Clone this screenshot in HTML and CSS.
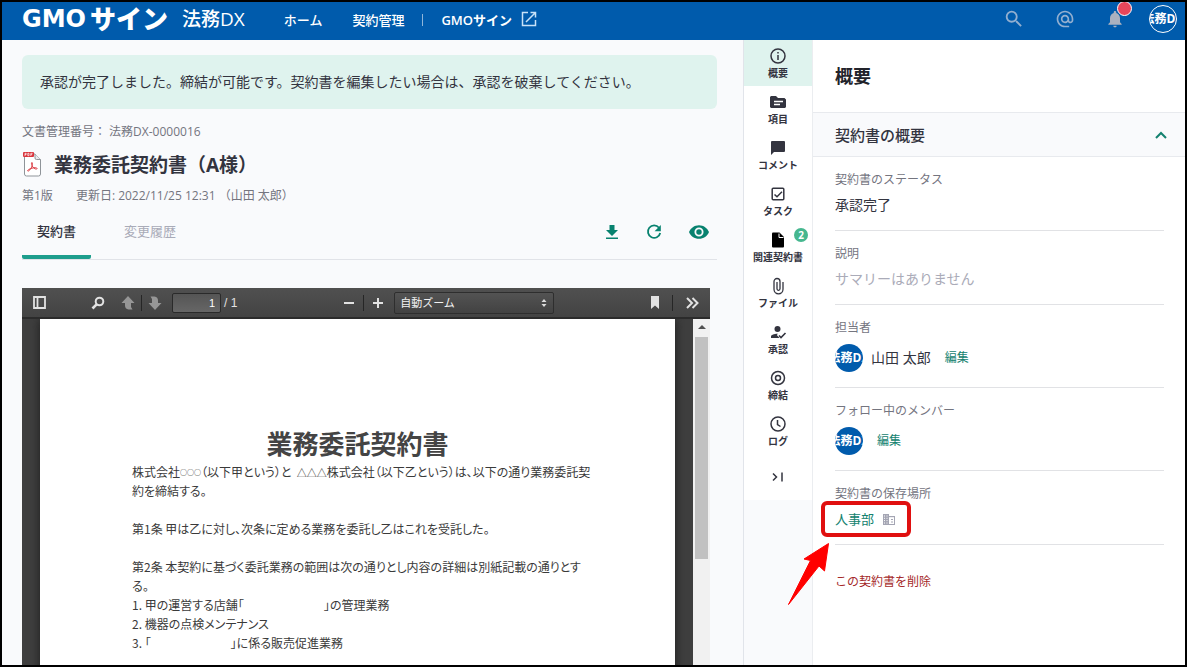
FILE: index.html
```html
<!DOCTYPE html>
<html lang="ja">
<head>
<meta charset="utf-8">
<meta name="viewport" content="width=device-width, initial-scale=1">
<title>業務委託契約書（A様） - 法務DX</title>
<link rel="stylesheet" href="styles.css">
</head>
<body>
<header class="topbar">
  <a class="logo" href="#"><span class="logo-latin">GMO</span><span class="logo-kana">サイン</span><span class="logo-product">法務DX</span></a>
  <nav class="topnav">
    <a href="#">ホーム</a>
    <a href="#">契約管理</a>
  </nav>
  <span class="topsep"></span>
  <a class="extlink" href="#">GMOサイン
    <svg width="16" height="16" viewBox="0 0 16 16" fill="none" stroke="currentColor" stroke-width="1.5"><path d="M7 1.5H1.5v13h13V9M9.5 1.5h5v5M14.5 1.5L5 11"/></svg>
  </a>
  <div class="topactions">
    <button class="icon-btn" aria-label="検索"><svg width="22" height="22" viewBox="0 0 24 24" fill="currentColor"><path d="M15.5 14h-.79l-.28-.27A6.47 6.47 0 0 0 16 9.5 6.5 6.5 0 1 0 9.5 16c1.61 0 3.09-.59 4.23-1.57l.27.28v.79l5 4.99L20.49 19l-4.99-5zm-6 0C7.01 14 5 11.99 5 9.500S7.01 5 9.500 5 14 7.010 14 9.500 11.990 14 9.500 14z"/></svg></button>
    <button class="icon-btn" aria-label="メンション"><svg width="20" height="20" viewBox="0 0 24 24" fill="currentColor"><path d="M12 2C6.480 2 2 6.480 2 12s4.480 10 10 10h5v-2h-5c-4.340 0-8-3.660-8-8s3.660-8 8-8 8 3.660 8 8v1.430c0 .79-.71 1.570-1.500 1.570s-1.500-.78-1.500-1.570V12c0-2.760-2.240-5-5-5s-5 2.240-5 5 2.240 5 5 5c1.380 0 2.640-.56 3.540-1.470.65.890 1.770 1.470 2.960 1.470 1.970 0 3.500-1.600 3.500-3.570V12c0-5.520-4.480-10-10-10zm0 13c-1.660 0-3-1.340-3-3s1.340-3 3-3 3 1.340 3 3-1.340 3-3 3z"/></svg></button>
    <button class="icon-btn bell" aria-label="通知"><svg width="20" height="20" viewBox="0 0 24 24" fill="currentColor"><path d="M12 22c1.100 0 2-.9 2-2h-4c0 1.100.89 2 2 2zm6-6v-5c0-3.070-1.640-5.640-4.500-6.320V4c0-.83-.67-1.500-1.500-1.500s-1.500.67-1.500 1.500v.68C7.630 5.360 6 7.920 6 11v5l-2 2v1h16v-1l-2-2z"/></svg><span class="bell-dot"></span></button>
    <button class="avatar avatar-ring" aria-label="アカウント"><span>法務DX</span></button>
  </div>
</header>

<div class="layout">
  <main class="content">
    <p class="notice">承認が完了しました。締結が可能です。契約書を編集したい場合は、承認を破棄してください。</p>
    <p class="docnum">文書管理番号： 法務DX-0000016</p>
    <div class="title-row">
      <svg width="20" height="26" viewBox="0 0 20 26"><path d="M4.500 2H13l5.500 5.500V22a2 2 0 0 1-2 2h-12a2 2 0 0 1-2-2V2z" fill="#fff" stroke="#8f9499"/><path d="M13 2v4a1.500 1.500 0 0 0 1.500 1.500h4" fill="#e8eaec" stroke="#8f9499"/><rect x="1" y="0" width="11" height="5" rx="1" fill="#d9343c"/><path d="M3 4V1.300h1.200v1.200H3M5.800 1.300v2.400H7V1.300zM8.800 4V1.300h1.800M8.800 2.600h1.400" fill="none" stroke="#fff" stroke-width=".7"/><path d="M10 10.500c-1 0-.5 2 .3 3.600.9 1.700 2.600 3 4 3 1.200 0 1-1.300-.7-1.400-2.300-.1-5.100.7-7 1.900-1.500 1-1 2 .1 1.300 1.500-1 3-3.500 3.500-5.300.4-1.500.4-3.100-.2-3.100z" fill="none" stroke="#dc3b42" stroke-width="1"/></svg>
      <h1>業務委託契約書（A様）</h1>
    </div>
    <p class="meta"><span>第1版</span><span>更新日: 2022/11/25 12:31 （山田 太郎）</span></p>
    <div class="tabs">
      <button class="tab tab-active">契約書</button>
      <button class="tab">変更履歴</button>
      <div class="tab-actions">
        <button class="icon-btn" aria-label="ダウンロード"><svg width="14" height="16" viewBox="0 0 14 16" fill="currentColor"><path d="M4.500 1h5v5H13l-6 6-6-6h3.500zM1 13.500h12V15H1z"/></svg></button>
        <button class="icon-btn" aria-label="再読み込み"><svg width="16" height="16" viewBox="0 0 16 16"><path d="M13 3.800A6.200 6.200 0 1 0 14.200 9" fill="none" stroke="currentColor" stroke-width="1.800"/><path d="M14.800 1v6.200H8.600z" fill="currentColor"/></svg></button>
        <button class="icon-btn" aria-label="プレビュー"><svg width="20" height="14" viewBox="0 0 22 15" fill="currentColor"><path d="M11 0C6 0 1.700 3.100 0 7.500 1.700 11.900 6 15 11 15s9.300-3.100 11-7.500C20.300 3.100 16 0 11 0zm0 12.500a5 5 0 1 1 0-10 5 5 0 0 1 0 10zm0-8a3 3 0 1 0 0 6 3 3 0 0 0 0-6z"/></svg></button>
      </div>
    </div>

    <section class="viewer" aria-label="契約書プレビュー">
      <div class="toolbar">
        <div class="tool-group tool-start">
          <button class="tool tool-side" aria-label="サイドバー"><svg width="13" height="13" viewBox="0 0 13 13"><path d="M1 1h11v11H1zM4.500 1v11" fill="none" stroke="currentColor" stroke-width="1.800"/></svg></button>
          <button class="tool" aria-label="文書内を検索"><svg width="14" height="14" viewBox="0 0 14 14" fill="none" stroke="currentColor"><circle cx="8.500" cy="5.500" r="3.800" stroke-width="2"/><path d="M5.600 8.400L1.500 12.500" stroke-width="2.600"/></svg></button>
          <button class="tool tool-dim" aria-label="前のページ"><svg width="14" height="14" viewBox="0 0 14 14" fill="currentColor"><path d="M7 0l6.500 7H10v4l1.500 2.500H7.500Q4 13 4 9.500V7H.5z"/></svg></button>
          <span class="tool-sep"></span>
          <button class="tool tool-dim" aria-label="次のページ"><svg width="14" height="14" viewBox="0 0 14 14" fill="currentColor"><path d="M7 14l6.500-7H10V4.500Q10 1 6.500.5H2.500L4 3v4H.5z"/></svg></button>
          <input class="page-input" type="text" value="1" aria-label="ページ">
          <span class="page-total">/ 1</span>
        </div>
        <div class="tool-group tool-mid">
          <button class="tool" aria-label="縮小"><svg width="10" height="10" viewBox="0 0 10 10"><path d="M0 5h10" stroke="currentColor" stroke-width="2"/></svg></button>
          <span class="tool-sep"></span>
          <button class="tool" aria-label="拡大"><svg width="10" height="10" viewBox="0 0 10 10"><path d="M0 5h10M5 0v10" stroke="currentColor" stroke-width="2"/></svg></button>
          <div class="zoom-wrap">
            <select class="zoom-select" aria-label="ズーム"><option>自動ズーム</option></select>
            <svg class="zoom-arrows" width="6" height="8" viewBox="0 0 6 8" fill="#ddd"><path d="M3 0l2.500 3h-5zM3 8l2.500-3h-5z"/></svg>
          </div>
        </div>
        <div class="tool-group tool-end">
          <button class="tool" aria-label="ブックマーク"><svg width="8" height="13" viewBox="0 0 8 13" fill="currentColor"><path d="M0 0h8v13L4 9.500 0 13z"/></svg></button>
          <span class="tool-sep"></span>
          <button class="tool" aria-label="その他"><svg width="13" height="12" viewBox="0 0 13 12" fill="none" stroke="currentColor" stroke-width="2"><path d="M1 1l5 5-5 5M6.500 1l5 5-5 5"/></svg></button>
        </div>
      </div>
      <div class="stage">
        <article class="page">
          <h2>業務委託契約書</h2>
          <p>株式会社<span class="circles">○○○</span>（以下甲という）と&nbsp; <span class="triangles">△△△</span>株式会社（以下乙という）は、以下の通り業務委託契<br>約を締結する。</p>
          <p>第1条 甲は乙に対し、次条に定める業務を委託し乙はこれを受託した。</p>
          <p>第2条 本契約に基づく委託業務の範囲は次の通りとし内容の詳細は別紙記載の通りとす<br>る。<br>1. 甲の運営する店舗「<span class="blank"></span>」の管理業務<br>2. 機器の点検メンテナンス<br>3. 「<span class="blank"></span>」に係る販売促進業務</p>
        </article>
        <div class="scrollbar"><svg width="8" height="4" viewBox="0 0 8 4"><path d="M4 0l4 4H0z" fill="#505050"/></svg><div class="thumb"></div></div>
      </div>
    </section>
  </main>

  <nav class="rail">
    <div class="rail-list">
      <button class="rail-item rail-active"><svg width="18" height="18" viewBox="0 0 18 18" fill="none" stroke="currentColor" stroke-width="1.500"><circle cx="9" cy="9" r="7"/><path d="M9 8v5M9 5v1.600"/></svg>概要</button>
      <button class="rail-item"><svg width="18" height="18" viewBox="0 0 18 18"><path d="M2 3h5l2 2h6.500L17 6.500V14l-1 1H2l-1-1V4z" fill="currentColor"/><path d="M5 8.500h9M5 11.500h6" stroke="#fff" stroke-width="1.500"/></svg>項目</button>
      <button class="rail-item"><svg width="18" height="18" viewBox="0 0 18 18" fill="currentColor"><path d="M3 2h12a1 1 0 0 1 1 1v9a1 1 0 0 1-1 1H5l-3 3V3a1 1 0 0 1 1-1z"/></svg>コメント</button>
      <button class="rail-item"><svg width="18" height="18" viewBox="0 0 18 18" fill="none" stroke="currentColor" stroke-width="1.500"><rect x="3.200" y="3.200" width="11.600" height="11.600" rx="1"/><path d="M5.500 9.500l2.500 2.300 5-5"/></svg>タスク</button>
      <button class="rail-item"><svg width="18" height="18" viewBox="0 0 18 18"><path d="M4 1.500h6.500L15 6v9.500a1 1 0 0 1-1 1H4a1 1 0 0 1-1-1v-13a1 1 0 0 1 1-1z" fill="#000"/><path d="M10 2.500v4h4.500" stroke="#fff" fill="none"/></svg>関連契約書<span class="badge">2</span></button>
      <button class="rail-item"><svg width="18" height="18" viewBox="0 0 18 18" fill="none" stroke="currentColor" stroke-width="1.300"><path d="M14 5v7.300a4.500 4.500 0 0 1-9 0V4.500a3 3 0 0 1 6 0v7.300a1.500 1.500 0 0 1-3 0V5"/></svg>ファイル</button>
      <button class="rail-item"><svg width="18" height="18" viewBox="0 0 18 18"><circle cx="8.500" cy="6" r="3" fill="currentColor"/><path d="M2 15v-1.500c0-2 4-3 7-2.800l-1.200 1.300L10.500 15z" fill="currentColor"/><path d="M10 12.500l2 2 4.500-4.500" fill="none" stroke="currentColor" stroke-width="1.600"/></svg>承認</button>
      <button class="rail-item"><svg width="18" height="18" viewBox="0 0 18 18" fill="none" stroke="currentColor" stroke-width="1.500"><circle cx="9" cy="9" r="6.500"/><circle cx="9" cy="9" r="2.500"/></svg>締結</button>
      <button class="rail-item"><svg width="18" height="18" viewBox="0 0 18 18" fill="none" stroke="currentColor" stroke-width="1.500"><circle cx="9" cy="9" r="7"/><path d="M8.500 5v4.500l3 2"/></svg>ログ</button>
      <button class="rail-item" aria-label="パネルを閉じる"><svg width="18" height="18" viewBox="0 0 18 18" fill="none" stroke="currentColor" stroke-width="1.500"><path d="M4 5.500L7.500 9 4 12.500M13 4.500v9"/></svg></button>
    </div>
  </nav>

  <aside class="panel">
    <h2 class="panel-title">概要</h2>
    <button class="panel-section">契約書の概要<svg width="12" height="8" viewBox="0 0 12 8" fill="none" stroke="#14826f" stroke-width="2"><path d="M1 7l5-5 5 5"/></svg></button>
    <div class="fields">
      <div class="field"><div class="label">契約書のステータス</div><div class="value">承認完了</div></div>
      <div class="field"><div class="label">説明</div><div class="value value-empty">サマリーはありません</div></div>
      <div class="field"><div class="label">担当者</div><div class="value value-user"><span class="avatar"><span>法務DX</span></span><span class="user-name">山田 太郎</span><a class="edit" href="#">編集</a></div></div>
      <div class="field"><div class="label">フォロー中のメンバー</div><div class="value value-user"><span class="avatar"><span>法務DX</span></span><a class="edit" href="#">編集</a></div></div>
      <div class="field"><div class="label">契約書の保存場所</div>
        <div class="value value-place"><a href="#">人事部</a>
          <svg width="12" height="12" viewBox="0 0 12 12"><path d="M0 1h6v2h6v9H0z" fill="#a4a5b3"/><path d="M1 3h1M3.500 3h1M1 5.300h1M3.500 5.300h1M1 7.600h1M3.500 7.600h1M1 10h1M3.500 10h1" stroke="#fff" stroke-width="1"/><path d="M6 4.200h5V11H6z" fill="#fff"/><path d="M8 6.500h2M8 9h2" stroke="#a4a5b3"/></svg>
          <span class="mark-box"></span>
          <svg class="mark-arrow" width="46" height="66" viewBox="0 0 46 66"><path d="M42.500 2.500L18 18l6.500 1.500L2.500 63.500 33 25l5.500 5z" fill="#f00" stroke="#f00" stroke-linejoin="round"/></svg>
        </div>
      </div>
    </div>
    <a class="delete" href="#">この契約書を削除</a>
  </aside>
</div>
</body>
</html>
```

FILE: styles.css
```css
* { box-sizing: border-box; }

body {
  margin: 0;
  height: 100vh;
  border: 2px solid #000;
  display: flex;
  flex-direction: column;
  overflow: hidden;
  background: #f9fafc;
  color: #33343f;
  font-family: "Open Sans", "Noto Sans CJK JP", sans-serif;
  font-size: 14px;
}

p, h1, h2 { margin: 0; }
a { color: inherit; text-decoration: none; }
button {
  border: 0;
  padding: 0;
  background: none;
  color: inherit;
  font: inherit;
  cursor: pointer;
}
svg { display: block; flex: none; }

/* Top bar */
.topbar {
  flex: none;
  display: flex;
  align-items: center;
  height: 38px;
  padding: 0 8px 4px 20px;
  background: #005bac;
  color: #fff;
}
.logo {
  display: flex;
  align-items: center;
  height: 34px;
  line-height: 34px;
  font-weight: 700;
}
.logo-latin { font-family: "DejaVu Sans", sans-serif; font-size: 24px; }
.logo-kana { margin-left: 4px; font-size: 26px; font-weight: 900; }
.logo-product { margin-left: 14px; font-size: 19px; font-weight: 500; }
.topnav { display: flex; gap: 30px; margin-left: 39px; font-weight: 500; font-size: 13px; }
.topsep { width: 1px; height: 12px; margin: 2px 18px 0; background: #8fb6da; }
.extlink { display: flex; align-items: center; gap: 9px; font-weight: 600; font-size: 13px; }
.extlink svg { color: #c8e2f8; }
.topactions { display: flex; align-items: center; gap: 30px; margin-left: auto; }
.icon-btn { display: flex; align-items: center; }
.topactions .icon-btn { color: #92afd0; }
.topactions .bell { position: relative; color: #aab1bf; }
.bell-dot {
  position: absolute;
  left: 12px;
  top: -8px;
  width: 15px;
  height: 15px;
  border: 1px solid #fff;
  border-radius: 50%;
  background: #e8465a;
}
.avatar {
  flex: none;
  display: flex;
  align-items: center;
  justify-content: center;
  width: 28px;
  height: 28px;
  border-radius: 50%;
  overflow: hidden;
  background: #005bac;
  color: #fff;
  font-size: 12px;
  font-weight: 700;
  line-height: 28px;
  white-space: nowrap;
}
.avatar-ring { border: 1px solid #fff; line-height: 26px; margin-left: -6px; }

/* Layout */
.layout {
  flex: 1;
  min-height: 0;
  display: grid;
  grid-template-columns: minmax(0, 1fr) 70px 372px;
}
.content {
  display: flex;
  flex-direction: column;
  min-height: 0;
  padding: 15px 26px 0 20px;
}
.notice {
  padding: 15px 18px;
  border-radius: 6px;
  background: #dff3ee;
  line-height: 24px;
}
.docnum {
  margin-top: 14px;
  color: #74757f;
  font-size: 12px;
  line-height: 18px;
}
.title-row { display: flex; align-items: center; gap: 12px; margin-top: 8px; }
.title-row h1 { font-size: 19px; line-height: 32px; font-weight: 700; }
.meta {
  display: flex;
  gap: 23px;
  margin-top: 6px;
  color: #74757f;
  font-size: 12px;
  line-height: 18px;
}
.tabs {
  flex: none;
  display: flex;
  height: 55px;
  border-bottom: 1px solid #e1e3e8;
}
.tab { padding: 0 15px; margin-right: 18px; font-size: 13px; color: #a9abb8; border-bottom: 4px solid transparent; }
.tab-active { color: #33343f; font-weight: 500; border-radius: 2px; border-bottom-color: #1e9e8d; }
.tab-actions { display: flex; align-items: center; gap: 27px; margin-left: auto; padding-right: 8px; color: #08826f; }

/* Document viewer */
.viewer {
  flex: 1;
  min-height: 0;
  display: flex;
  flex-direction: column;
  margin: 28px 7px 0 0;
  background: #3f3f3f;
}
.toolbar {
  flex: none;
  display: flex;
  align-items: center;
  justify-content: space-between;
  height: 29px;
  padding: 0 11px;
  background: linear-gradient(#505050, #434343);
  color: #e2e2e2;
}
.tool-group { display: flex; align-items: center; }
.tool { display: flex; align-items: center; }
.tool-start { gap: 8px; padding-right: 10px; }
.tool-side { margin-right: 37px; }
.tool-start .tool-sep { margin: 0 -2px; }
.tool-start .tool + .tool-dim { margin-left: 8px; }
.tool-dim { color: #969696; }
.tool-sep { width: 1px; height: 16px; background: #262626; }
.page-input {
  width: 49px;
  height: 20px;
  margin-left: 2px;
  padding: 0 5px;
  border: 1px solid #2a2a2a;
  border-radius: 2px;
  background: linear-gradient(#555, #666);
  color: #fff;
  text-align: right;
  font: 11px "Liberation Sans", sans-serif;
}
.page-total { margin-left: -5px; font: 12px "Liberation Sans", sans-serif; }
.tool-mid { gap: 9px; }
.zoom-wrap { position: relative; margin-left: 2px; }
.zoom-select {
  display: block;
  appearance: none;
  width: 160px;
  height: 22px;
  padding: 0 20px 0 5px;
  border: 1px solid #2e2e2e;
  border-radius: 2px;
  background: linear-gradient(#535353, #424242);
  color: #f2f2f2;
  font: 11px/18px "Liberation Sans", "Noto Sans CJK JP", sans-serif;
}
.zoom-arrows { position: absolute; right: 7px; top: 7px; }
.tool-end { gap: 13px; }
.stage {
  flex: 1;
  min-height: 0;
  display: flex;
  padding-left: 18px;
  border-top: 2px solid #2b2b2b;
  overflow: hidden;
}
.page {
  flex: 1;
  min-width: 0;
  height: 100vh;
  margin-right: 18px;
  padding: 105px 92px 0;
  background: #fff;
  box-shadow: 0 0 10px #1c1c1c;
  color: #3a3a3a;
  font-family: "Noto Sans CJK JP", sans-serif;
  font-feature-settings: "palt";
  font-size: 12px;
  line-height: 19px;
  white-space: nowrap;
}
.page h2 { text-align: center; font-size: 26px; line-height: 38px; font-weight: 700; color: #444; }
.page p + p { margin-top: 19px; }
.circles, .triangles { line-height: 1; }
.circles { font-size: 7px; font-weight: 700; vertical-align: 2px; }
.triangles { font-size: 10px; }
.blank { display: inline-block; width: 80px; }
.scrollbar {
  flex: none;
  display: flex;
  flex-direction: column;
  align-items: center;
  gap: 8px;
  width: 17px;
  padding-top: 6px;
  background: #f1f1f1;
}
.thumb { width: 13px; height: 222px; background: #c1c1c1; }

/* Icon rail */
.rail { border-left: 1px solid #e1e4ea; border-right: 1px solid #ebedf0; }
.rail-list { display: flex; flex-direction: column; background: #fff; }
.rail-item {
  position: relative;
  display: flex;
  flex-direction: column;
  align-items: center;
  height: 46px;
  padding-top: 7px;
  font-size: 10px;
  font-weight: 700;
  line-height: 16px;
  white-space: nowrap;
}
.rail-item:last-child { justify-content: center; padding-top: 0; }
.rail-active { background: #dff3ee; }
.badge {
  position: absolute;
  right: 4px;
  top: 4px;
  width: 14px;
  height: 14px;
  border-radius: 50%;
  background: #46b78f;
  color: #fff;
  line-height: 14px;
}

/* Detail panel */
.panel { background: #fff; }
.panel-title {
  padding: 0 22px;
  font-size: 18px;
  font-weight: 700;
  line-height: 72px;
  color: #22232b;
}
.panel-section {
  display: flex;
  align-items: center;
  justify-content: space-between;
  width: 100%;
  height: 45px;
  padding: 0 18px 0 22px;
  border-top: 1px solid #e8eaee;
  border-bottom: 1px solid #e8eaee;
  background: #f9fafc;
  font-size: 15px;
  font-weight: 500;
}
.fields { padding: 0 21px 0 22px; }
.field { padding: 14px 0 13px; border-bottom: 1px solid #e1e2e5; }
.label { color: #74757f; font-size: 12px; line-height: 18px; }
.value { margin-top: 4px; line-height: 24px; }
.value-empty { color: #aaabb8; }
.value-user { display: flex; align-items: center; height: 33px; }
.user-name { margin-left: 8px; }
.edit { margin-left: 14px; font-size: 12px; color: #14826f; }
.value-place { position: relative; display: flex; align-items: center; gap: 9px; font-size: 13px; color: #14826f; }
.mark-box {
  position: absolute;
  left: -14px;
  top: -6px;
  width: 90px;
  height: 36px;
  border: 4px solid #e01010;
  border-radius: 6px;
}
.mark-arrow { position: absolute; left: -49px; top: 34px; }
.delete { display: inline-block; margin: 28px 22px 0; font-size: 12px; line-height: 18px; color: #a52a2a; }
```
